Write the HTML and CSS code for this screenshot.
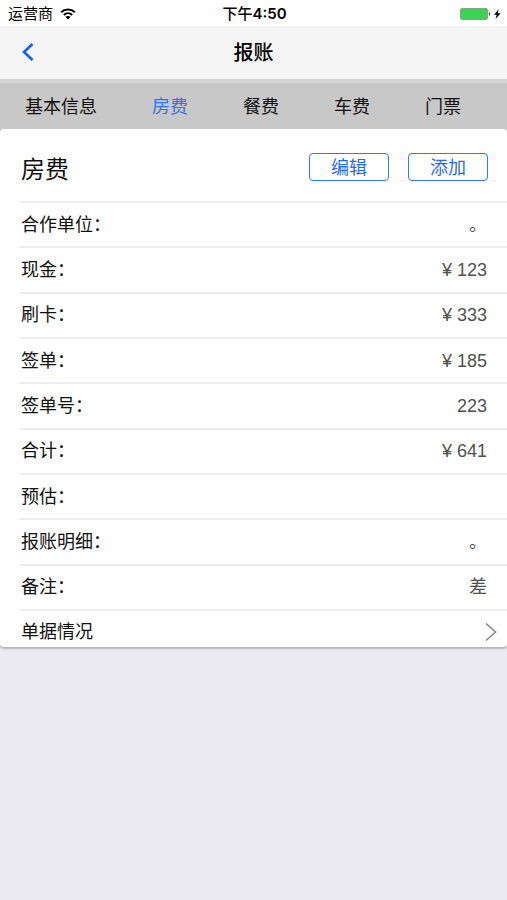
FILE: index.html
```html
<!DOCTYPE html>
<html lang="zh-CN">
<head>
<meta charset="utf-8">
<meta name="viewport" content="width=device-width, initial-scale=1">
<title>报账</title>
<link rel="stylesheet" href="styles.css">
</head>
<body>
<div class="status">
  <div class="carrier">
    <span>运营商</span>
    <svg width="16" height="12" viewBox="0 0 16 12" fill="none" stroke="#000" stroke-width="2" aria-hidden="true">
      <path d="M1.2 4.3C5 .6 11 .6 14.8 4.3"/>
      <path d="M3.8 7C6.2 4.8 9.8 4.8 12.2 7"/>
      <path d="M8 11.4 5.4 8.8C6.9 7.6 9.1 7.6 10.6 8.8Z" fill="#000" stroke="none"/>
    </svg>
  </div>
  <span class="clock"><span class="period">下午</span>4:50</span>
  <svg class="battery" width="41" height="14" viewBox="0 0 41 14" aria-hidden="true">
    <rect x=".5" y="1.5" width="27" height="11" rx="1.5" fill="#3fd252" stroke="#7fa886"/>
    <path d="M29 5c1.3.4 1.3 3.6 0 4z" fill="#333"/>
    <path d="M38.7 2.2 34 7.7h2.7L35.5 12 40.7 6.2H37.7z" fill="#000"/>
  </svg>
</div>
<header class="navbar">
  <button class="back" type="button" aria-label="返回">
    <svg width="12" height="18" viewBox="0 0 12 18" fill="none" stroke="#1060f8" stroke-width="2.6" aria-hidden="true"><path d="M10.5 1 2 9l8.5 8"/></svg>
  </button>
  <h1>报账</h1>
</header>
<nav class="tabs">
  <a href="#info">基本信息</a>
  <a href="#room" class="active" aria-current="page">房费</a>
  <a href="#meal">餐费</a>
  <a href="#car">车费</a>
  <a href="#ticket">门票</a>
</nav>
<main>
  <section class="card" id="room">
    <div class="card-head">
      <h2>房费</h2>
      <button class="action" type="button">编辑</button>
      <button class="action" type="button">添加</button>
    </div>
    <dl class="rows">
      <div class="row"><dt>合作单位：</dt><dd>。</dd></div>
      <div class="row"><dt>现金：</dt><dd>¥ 123</dd></div>
      <div class="row"><dt>刷卡：</dt><dd>¥ 333</dd></div>
      <div class="row"><dt>签单：</dt><dd>¥ 185</dd></div>
      <div class="row"><dt>签单号：</dt><dd>223</dd></div>
      <div class="row"><dt>合计：</dt><dd>¥ 641</dd></div>
      <div class="row"><dt>预估：</dt><dd></dd></div>
      <div class="row"><dt>报账明细：</dt><dd>。</dd></div>
      <div class="row"><dt>备注：</dt><dd>差</dd></div>
    </dl>
    <a class="link-row" href="#receipts">
      <span>单据情况</span>
      <svg width="12" height="20" viewBox="0 0 12 20" fill="none" stroke="#858585" stroke-width="1.5" aria-hidden="true"><path d="M1 1.5 10.5 10 1 18.5"/></svg>
    </a>
  </section>
</main>
</body>
</html>
```
FILE: styles.css
```css
* {
  box-sizing: border-box;
}

body {
  margin: 0;
  min-height: 100vh;
  background: #ebebf1;
  color: #111;
  font-family: "Liberation Sans", "Noto Sans CJK SC", sans-serif;
  font-size: 18px;
  line-height: 24px;
}

h1,
h2,
dl,
dd {
  margin: 0;
}

a {
  color: inherit;
  text-decoration: none;
}

button {
  padding: 0;
  background: none;
  font: inherit;
}

.status {
  display: grid;
  grid-template-columns: 1fr auto 1fr;
  align-items: center;
  height: 26px;
  padding: 1px 6px 0 8px;
  background: #fff;
  color: #000;
  font-size: 15px;
  line-height: 26px;
}

.carrier {
  display: flex;
  align-items: center;
  gap: 7px;
}

.clock {
  font-family: Inter, "Noto Sans CJK SC", sans-serif;
  font-weight: 600;
}

.period {
  font-weight: 500;
}

.battery {
  justify-self: end;
}

.navbar {
  display: grid;
  grid-template-columns: 1fr auto 1fr;
  align-items: center;
  height: 53px;
  padding-bottom: 2px;
  background: #f5f5f5;
}

.navbar h1 {
  color: #000;
  font-size: 20px;
  font-weight: 500;
  font-family: "Noto Sans CJK SC", sans-serif;
}

.back {
  display: flex;
  justify-self: start;
  margin-left: 22px;
  border: 0;
}

.tabs {
  display: flex;
  align-items: center;
  gap: 55px;
  height: 50px;
  padding: 1px 25px 0;
  border-top: 4px solid #d5d5d5;
  background: #c8c8c8;
  white-space: nowrap;
}

.tabs .active {
  color: #2f74f0;
}

.card {
  border-radius: 4px;
  background: #fff;
  box-shadow: 0 2px 2px #b4b4ba;
}

main {
  background: linear-gradient(#c8c8c8 8px, transparent 8px);
}

.card-head {
  display: flex;
  align-items: center;
  gap: 19px;
  height: 72px;
  padding: 4px 19px 0 21px;
}

.card-head h2 {
  flex: 1;
  padding-top: 6px;
  font-size: 24px;
  font-weight: 400;
}

.action {
  width: 80px;
  height: 28px;
  padding-top: 2px;
  border: 1px solid #3478f6;
  border-radius: 4px;
  color: #1f6df2;
  line-height: 24px;
}

.rows {
  display: grid;
  grid-auto-rows: 1fr;
  min-height: 408px;
  margin-left: 20px;
}

.row {
  display: flex;
  align-items: center;
  justify-content: space-between;
  padding: 0 20px 0 1px;
  border-top: 2px solid #ececec;
}

.row dd {
  color: #505050;
}

.link-row {
  display: flex;
  align-items: center;
  justify-content: space-between;
  height: 38px;
  margin-left: 20px;
  padding: 5px 10px 0 1px;
  border-top: 2px solid #ececec;
}
```
